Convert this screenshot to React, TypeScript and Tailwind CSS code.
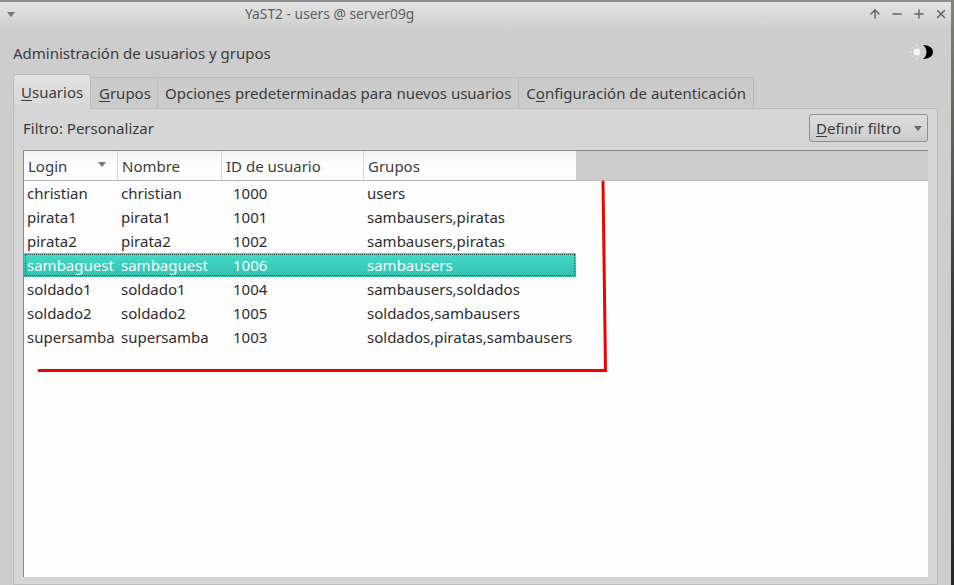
import { ArrowUp, Minus, Plus, X } from "lucide-react";

const rows = [
  ["christian", "christian", "1000", "users"],
  ["pirata1", "pirata1", "1001", "sambausers,piratas"],
  ["pirata2", "pirata2", "1002", "sambausers,piratas"],
  ["sambaguest", "sambaguest", "1006", "sambausers"],
  ["soldado1", "soldado1", "1004", "sambausers,soldados"],
  ["soldado2", "soldado2", "1005", "soldados,sambausers"],
  ["supersamba", "supersamba", "1003", "soldados,piratas,sambausers"],
];

function Caret({ className }: { className: string }) {
  return (
    <svg width="8" height="5" viewBox="0 0 8 5" className={className}>
      <path d="M0 0h8L4 5z" fill="currentColor" />
    </svg>
  );
}

function Tab({ pre, key1, post, active, extra }: { pre: string; key1: string; post: string; active?: boolean; extra?: string }) {
  return (
    <div
      className={
        active
          ? "h-[35px] w-[78px] pl-[7px] pt-[7px] -mb-px z-10 rounded-t-[3px] border border-b-0 border-[#bcbcbc] bg-gradient-to-b from-[#e2e2e2] to-[#d6d6d6] text-[#3c3c3c]"
          : `h-[31px] ${extra ?? "px-[7px]"} pt-[5px] border-r border-t border-[#bcbcbc] bg-[#cbcbcb] text-[#3c3c3c]`
      }
    >
      {pre}
      <span className="underline underline-offset-2 decoration-1">{key1}</span>
      {post}
    </div>
  );
}

function HeaderCell({ w, text, sorted }: { w: string; text: string; sorted?: boolean }) {
  return (
    <div className={`${w} shrink-0 pl-[4px] pr-[11px] pt-[5px] flex justify-between border-r border-[#d6d6d6] bg-gradient-to-b from-[#f3f3f3] via-[#fdfdfd] to-[#fdfdfd]`}>
      <span>{text}</span>
      {sorted && <Caret className="mt-[6px] text-[#777777]" />}
    </div>
  );
}

function Row({ r }: { r: string[] }) {
  const selected = r[0] === "sambaguest";
  return (
    <div
      className={
        selected
          ? "w-[552px] h-[24px] flex items-center outline-1 outline-dotted -outline-offset-2 outline-[#1f4f4a] bg-gradient-to-b from-[#45dcc8] to-[#33c1ae] text-[#f4fffd]"
          : "w-[552px] h-[24px] flex items-center"
      }
    >
      <span className="w-[94px] pl-[3px] shrink-0 whitespace-nowrap">{r[0]}</span>
      <span className="w-[104px] pl-[3px] shrink-0 whitespace-nowrap">{r[1]}</span>
      <span className="w-[142px] pl-[12px] shrink-0 -ml-px">{r[2]}</span>
      <span className="pl-[4px] whitespace-nowrap">{r[3]}</span>
    </div>
  );
}

export default function App() {
  return (
    <div className="w-[954px] h-[585px] overflow-hidden relative bg-gradient-to-b from-[#8a8277] via-[#3d3934] to-[#2a2522] font-['Noto_Sans','Open_Sans',sans-serif] text-[15px] leading-[20px]">
      <div className="w-[951px] h-[585px] flex flex-col bg-[#cdcdcd] border-t-2 border-[#8f8f8f]">
        {/* title bar */}
        <div className="h-[28px] shrink-0 flex items-center pl-[7px] pr-[3px] bg-gradient-to-b from-[#e4e4e4] to-[#cdcdcd] text-[#5f5f5f]">
          <Caret className="text-[#777777] -mt-[4px]" />
          <div className="flex-1 pl-[230px] text-[13.8px] -mt-[4px] whitespace-nowrap">YaST2 - users @ server09g</div>
          <div className="flex items-center gap-[8px] -mt-[4px] text-[#666666]">
            <ArrowUp size={14} strokeWidth={2.5} />
            <Minus size={14} strokeWidth={2.5} />
            <Plus size={14} strokeWidth={2.5} />
            <X size={14} strokeWidth={2.5} />
          </div>
        </div>

        {/* heading */}
        <div className="h-[44px] shrink-0 flex items-center justify-between pl-[13px] pr-[17px] text-[#3c3c3c]">
          <span className="pt-[2px]">Administración de usuarios y grupos</span>
          <svg width="26" height="18" viewBox="0 0 26 18">
            <circle cx="9" cy="9" r="3.5" fill="#f6f6f6" />
            <path d="M9 1v3M9 14v3M1 9h3M14 9h2M3.5 3.5l2 2M12.5 12.500l1.500 1.500M3.500 14.500l2-2M12.500 5.500l1.500-1.500" stroke="#e6e6e6" strokeWidth="1" />
            <path d="M15 2C21 2 25 5 25 9s-4 7-10 7c2.500-2 3.500-4.500 3.500-7S17.500 4 15 2z" fill="#000000" />
          </svg>
        </div>

        {/* tabs */}
        <div className="flex items-end pl-[13px] h-[34px] shrink-0 relative z-10">
          <Tab active pre="" key1="U" post="suarios" />
          <Tab pre="" key1="G" post="rupos" extra="w-[67px] pl-[8px]" />
          <Tab pre="Opcion" key1="e" post="s predeterminadas para nuevos usuarios" />
          <Tab pre="C" key1="o" post="nfiguración de autenticación" />
        </div>

        {/* panel */}
        <div className="w-[925px] ml-[13px] flex-1 min-h-0 flex flex-col px-[9px] pt-[5px] pb-[7px] bg-[#d6d6d6] border border-[#bcbcbc] rounded-t-[2px] text-[#3c3c3c]">
          <div className="h-[28px] shrink-0 flex items-center justify-between">
            <span>Filtro: Personalizar</span>
            <button className="w-[119px] h-[28px] flex items-center justify-between pl-[6px] pr-[5px] rounded-[3px] border border-[#8f8f8f] bg-gradient-to-b from-[#dedede] to-[#cccccc] text-[#3c3c3c]">
              <span>
                <span className="underline underline-offset-2 decoration-1">D</span>efinir filtro
              </span>
              <Caret className="text-[#666666]" />
            </button>
          </div>

          {/* table */}
          <div className="mt-[8px] flex-1 min-h-0 flex flex-col bg-[#fdfdfd] border-t border-l border-t-[#8a8a8a] border-l-[#8a8a8a]">
            <div className="h-[30px] shrink-0 flex bg-[#cdcdcd] border-b border-[#b8b8b8]">
              <HeaderCell w="w-[94px]" text="Login" sorted />
              <HeaderCell w="w-[104px]" text="Nombre" />
              <HeaderCell w="w-[142px]" text="ID de usuario" />
              <div className="w-[212px] pl-[4px] pt-[5px] bg-gradient-to-b from-[#f3f3f3] via-[#fdfdfd] to-[#fdfdfd]">Grupos</div>
            </div>
            <div className="text-[#2e2e2e]">
              {rows.map((r) => (
                <Row key={r[0]} r={r} />
              ))}
            </div>
          </div>
        </div>
      </div>

      {/* red annotation over the screenshot */}
      <svg className="absolute left-0 top-0 pointer-events-none" width="954" height="585">
        <path d="M39 370.500 L605.500 370.500 L603 182" fill="none" stroke="#f00000" strokeWidth="3" strokeLinecap="round" />
      </svg>
    </div>
  );
}
